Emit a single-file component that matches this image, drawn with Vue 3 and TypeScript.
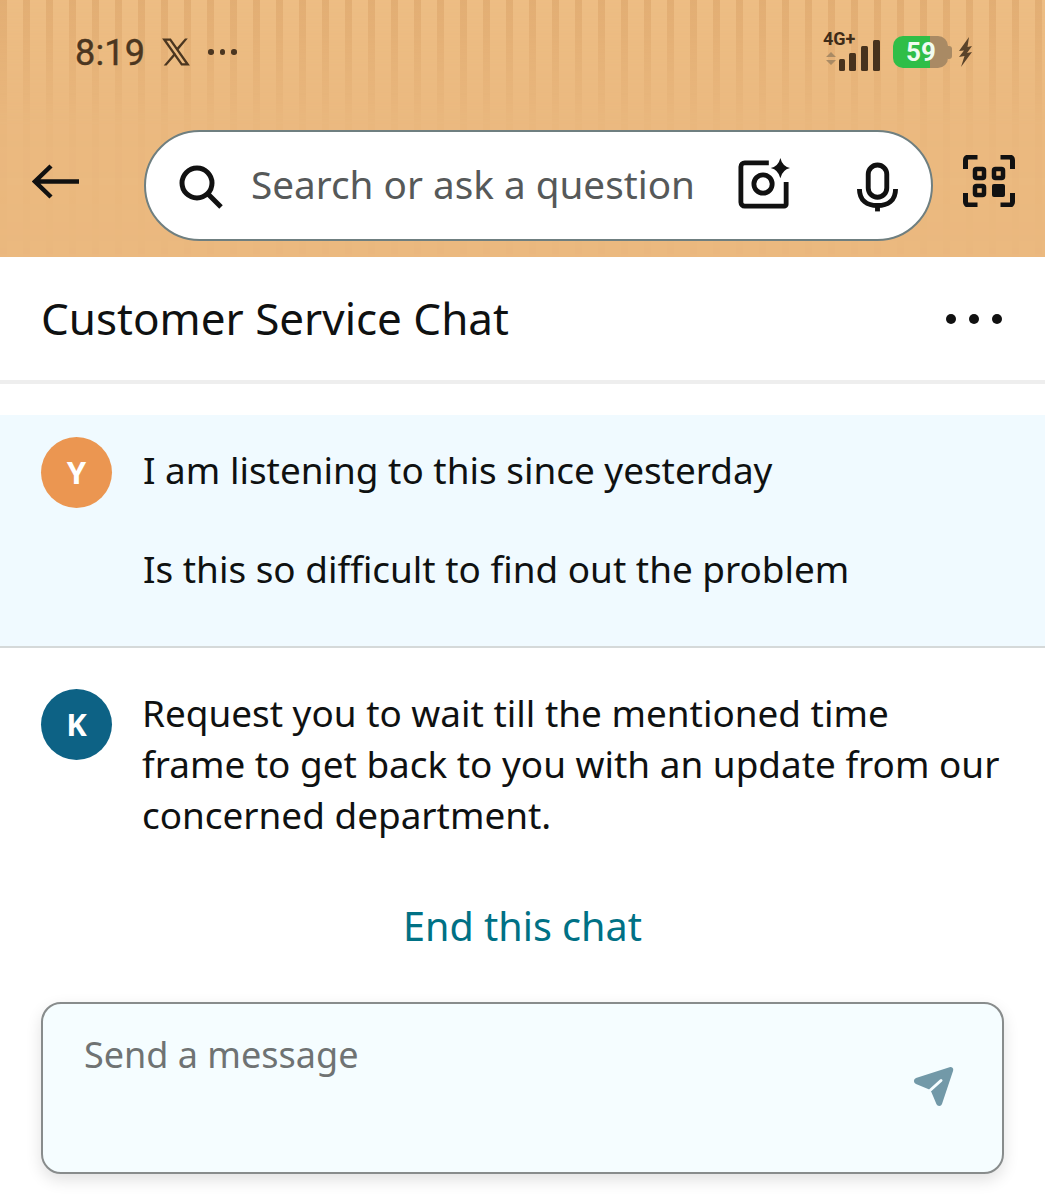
<script setup lang="ts">
interface Message { initial: string; tone: string; lines: string[] }
const messages: Message[] = [
  { initial: 'Y', tone: 'mine', lines: ['I am listening to this since yesterday', '', 'Is this so difficult to find out the problem'] },
  { initial: 'K', tone: 'agent', lines: ['Request you to wait till the mentioned time', 'frame to get back to you with an update from our', 'concerned department.'] },
]
</script>

<template>
  <div class="page">
    <header class="top">
      <div class="status">
        <div class="status-left">
          <span class="time">8:19</span>
          <svg class="x-logo" viewBox="0 0 28 28" aria-label="X">
            <path d="M1 1.500h8.200L27 26.500h-8.200zM5.200 3.600l14.700 20.800h2.900L8.100 3.600z" fill="#4b3620" fill-rule="evenodd" />
            <path d="M25 1.500h-2.600L14 11l1.400 2zM2.500 26.500h2.700l8.900-10.100-1.400-2z" fill="#4b3620" />
          </svg>
          <span class="dots-small"><i></i><i></i><i></i></span>
        </div>
        <div class="status-right">
          <div class="signal">
            <span class="net">4G+</span>
            <svg class="bars" viewBox="0 0 57 32">
              <path d="M2 17l5-5 5 5zM2 20h10l-5 5z" fill="#a98a64" />
              <rect x="15" y="19" width="6" height="12" rx="1.500" fill="#47321d" />
              <rect x="25" y="13" width="7" height="18" rx="1.500" fill="#47321d" />
              <rect x="37" y="6" width="7" height="25" rx="1.500" fill="#47321d" />
              <rect x="49" y="0" width="7" height="31" rx="1.500" fill="#47321d" />
            </svg>
          </div>
          <div class="battery">
            <div class="battery-body"><span>59</span></div>
            <i class="battery-cap"></i>
          </div>
          <svg class="bolt" viewBox="0 0 15 30">
            <path d="M11 0 1 14l5-.5L1 20l5.500-1L3 30 14 15l-5 1 5-7-4.500 1z" fill="#5a432a" />
          </svg>
        </div>
      </div>
      <div class="search-row">
        <svg class="back" viewBox="0 0 48 40">
          <path d="M47 18.500H4M19 3L3 18.500 19 34" fill="none" stroke="#111" stroke-width="4.500" />
        </svg>
        <div class="search">
          <svg class="s-icon" viewBox="0 0 44 44">
            <circle cx="18" cy="18" r="15" fill="none" stroke="#111" stroke-width="5" />
            <path d="M29 29l13 13" stroke="#111" stroke-width="5" fill="none" />
          </svg>
          <span class="s-text">Search or ask a question</span>
          <svg class="cam" viewBox="0 0 54 54">
            <path d="M32 5H7a4 4 0 0 0-4 4v37a4 4 0 0 0 4 4h41a2 2 0 0 0 2-2V25" fill="none" stroke="#111" stroke-width="5" />
            <circle cx="26" cy="27" r="9.500" fill="none" stroke="#111" stroke-width="5" />
            <path d="M44 0q2 8.500 10 10.500q-8 2-10 10.500q-2-8.500-10-10.500q8-2 10-10.500z" fill="#111" />
          </svg>
          <svg class="mic" viewBox="0 0 42 50">
            <rect x="11.500" y="2.500" width="19" height="33" rx="9.500" fill="none" stroke="#111" stroke-width="5" />
            <path d="M2.500 27c0 12 8 17 18.500 17s18.500-5 18.500-17" fill="none" stroke="#111" stroke-width="5" />
            <path d="M21 43v7" stroke="#111" stroke-width="5" />
          </svg>
        </div>
        <svg class="qr" viewBox="0 0 52 52">
          <path d="M2.500 14V5a3 3 0 0 1 3-3h9M37.500 2h9a3 3 0 0 1 3 3v9M2.500 38v9a3 3 0 0 0 3 3h9M37.500 50h9a3 3 0 0 0 3-3v-9" fill="none" stroke="#111" stroke-width="5" />
          <rect x="12" y="14" width="9" height="9" rx="1.500" fill="none" stroke="#111" stroke-width="4.500" />
          <rect x="31" y="14" width="9" height="9" rx="1.500" fill="none" stroke="#111" stroke-width="4.500" />
          <rect x="12" y="31" width="9" height="9" rx="1.500" fill="none" stroke="#111" stroke-width="4.500" />
          <rect x="29" y="29" width="13" height="13" rx="2" fill="#111" />
        </svg>
      </div>
    </header>

    <div class="title-row">
      <h1>Customer Service Chat</h1>
      <span class="more"><i></i><i></i><i></i></span>
    </div>

    <main class="thread">
      <section v-for="m in messages" :key="m.initial" class="msg" :class="m.tone">
        <div class="avatar">{{ m.initial }}</div>
        <div class="body">
          <p v-for="(l, i) in m.lines" :key="i">{{ l || '\u00a0' }}</p>
        </div>
      </section>
    </main>

    <div class="end">End this chat</div>

    <div class="composer">
      <span class="placeholder">Send a message</span>
      <svg class="send" viewBox="0 0 42 42">
        <path d="M3 12 36.500 1.200a2.800 2.800 0 0 1 3.600 3.600L29 38a3 3 0 0 1-5.500.3L17.500 24 3 18a3.200 3.200 0 0 1 0-6z" fill="#7299a8" />
        <path d="M17.500 24 28 14.500" fill="none" stroke="#f5fdff" stroke-width="3" stroke-linecap="round" />
      </svg>
    </div>
  </div>
</template>

<style>
html, body { margin: 0; background: #fff; }
</style>

<style scoped>
.page { width: 1045px; height: 1200px; overflow: hidden; background: #fff; font-family: "Noto Sans", "Open Sans", sans-serif; color: #0f1111; }
.top { height: 257px; box-sizing: border-box; padding-top: 27px; background: #ebb97f; position: relative; }
.top::before { content: ""; position: absolute; inset: 0; background: repeating-linear-gradient(90deg, rgba(200,140,80,.24) 0 7px, rgba(245,205,150,.2) 7px 23px); -webkit-mask-image: linear-gradient(#000 0, rgba(0,0,0,.12) 125px, rgba(0,0,0,.04) 257px); mask-image: linear-gradient(#000 0, rgba(0,0,0,.12) 125px, rgba(0,0,0,.04) 257px); }
.status, .search-row { position: relative; }
.status { display: flex; justify-content: space-between; align-items: center; height: 50px; padding: 0 72px 0 75px; }
.status-left, .status-right { display: flex; align-items: center; }
.time { font-family: Roboto, sans-serif; font-size: 36px; color: #4b3620; width: 87px; line-height: 52px; padding-top: 2px; letter-spacing: .2px; -webkit-text-stroke: .4px #4b3620; }
.x-logo { width: 30px; height: 30px; margin-left: -1px; }
.dots-small { display: flex; gap: 6px; margin-left: 17px; }
.dots-small i { width: 5.500px; height: 5.500px; border-radius: 50%; background: #4b3620; }
.signal { position: relative; width: 57px; height: 42px; }
.net { position: absolute; left: -1px; top: -1px; font-family: Roboto, sans-serif; font-weight: 700; font-size: 18px; line-height: 18px; color: #3f2c18; }
.bars { position: absolute; right: 0; top: 9px; width: 57px; height: 32px; }
.battery { display: flex; align-items: center; margin-left: 12px; }
.battery-body { width: 55px; height: 32px; border-radius: 10px; background: linear-gradient(90deg, #2fbe47 0 37px, #a98a64 37px); display: flex; align-items: center; padding-left: 13px; box-sizing: border-box; }
.battery-body span { font-family: Roboto, sans-serif; font-weight: 700; font-size: 26px; color: #f0fbf0; }
.battery-cap { width: 4px; height: 13px; background: #a98a64; border-radius: 0 3px 3px 0; }
.bolt { width: 15px; height: 30px; margin-left: 6px; }
.search-row { display: flex; align-items: center; height: 110px; margin-top: 54px; }
.back { width: 48px; height: 40px; margin-left: 32px; margin-top: -6px; }
.search { width: 789px; height: 111px; margin: -1px 0 0 64px; box-sizing: border-box; border: 2px solid #6f7f80; border-radius: 56px; background: #fff; display: flex; align-items: center; padding-left: 33px; }
.s-icon { width: 44px; height: 44px; flex: none; margin-top: 2px; }
.s-text { font-size: 38.7px; color: #565959; margin-left: 28px; width: 487px; flex: none; white-space: nowrap; margin-top: -3px; }
.cam { width: 52px; height: 52px; flex: none; margin-top: -3px; }
.mic { width: 41px; height: 50px; flex: none; margin-left: 67px; margin-top: 2px; }
.qr { width: 52px; height: 52px; margin-left: 30px; margin-top: -11px; }
.title-row { height: 123px; border-bottom: 4px solid #eeeeee; display: flex; justify-content: space-between; align-items: center; padding: 0 42px 0 41px; }
h1 { margin: 0; font-size: 44px; font-weight: 400; line-height: 1.2; }
.more { display: flex; gap: 13px; padding-right: 1px; }
.more i { width: 10px; height: 10px; border-radius: 50%; background: #111; }
.thread { padding-top: 31px; }
.msg { display: flex; gap: 31px; padding: 0 41px; box-sizing: border-box; }
.msg.mine { background: #f0faff; height: 233px; padding-top: 22px; border-bottom: 2px solid #d5d9d9; }
.msg.agent { padding-top: 41px; }
.avatar { width: 71px; height: 71px; flex: none; box-sizing: border-box; padding-bottom: 2px; border-radius: 50%; display: flex; align-items: center; justify-content: center; color: #fff; font-weight: 700; font-size: 31px; }
.mine .avatar { background: #eb9651; }
.agent .avatar { background: #0d6285; }
.body p { margin: 0; font-size: 36.9px; line-height: 49.500px; white-space: nowrap; }
.mine .body { padding-top: 9px; }
.agent .body { margin-top: -1px; margin-left: -1px; }
.agent .body p { line-height: 51px; }
.end { text-align: center; color: #007185; font-size: 39.500px; line-height: 52px; margin-top: 59px; }
.composer { position: relative; margin: 50px 0 0 41px; width: 963px; height: 172px; box-sizing: border-box; border: 2px solid #888c8c; border-radius: 20px; background: #f5fdff; box-shadow: 0 6px 16px rgba(0,0,0,.12); padding: 26px 41px; }
.placeholder { font-size: 36px; line-height: 50px; color: #6f7373; }
.send { position: absolute; right: 47px; top: 62px; width: 42px; height: 42px; }
</style>
